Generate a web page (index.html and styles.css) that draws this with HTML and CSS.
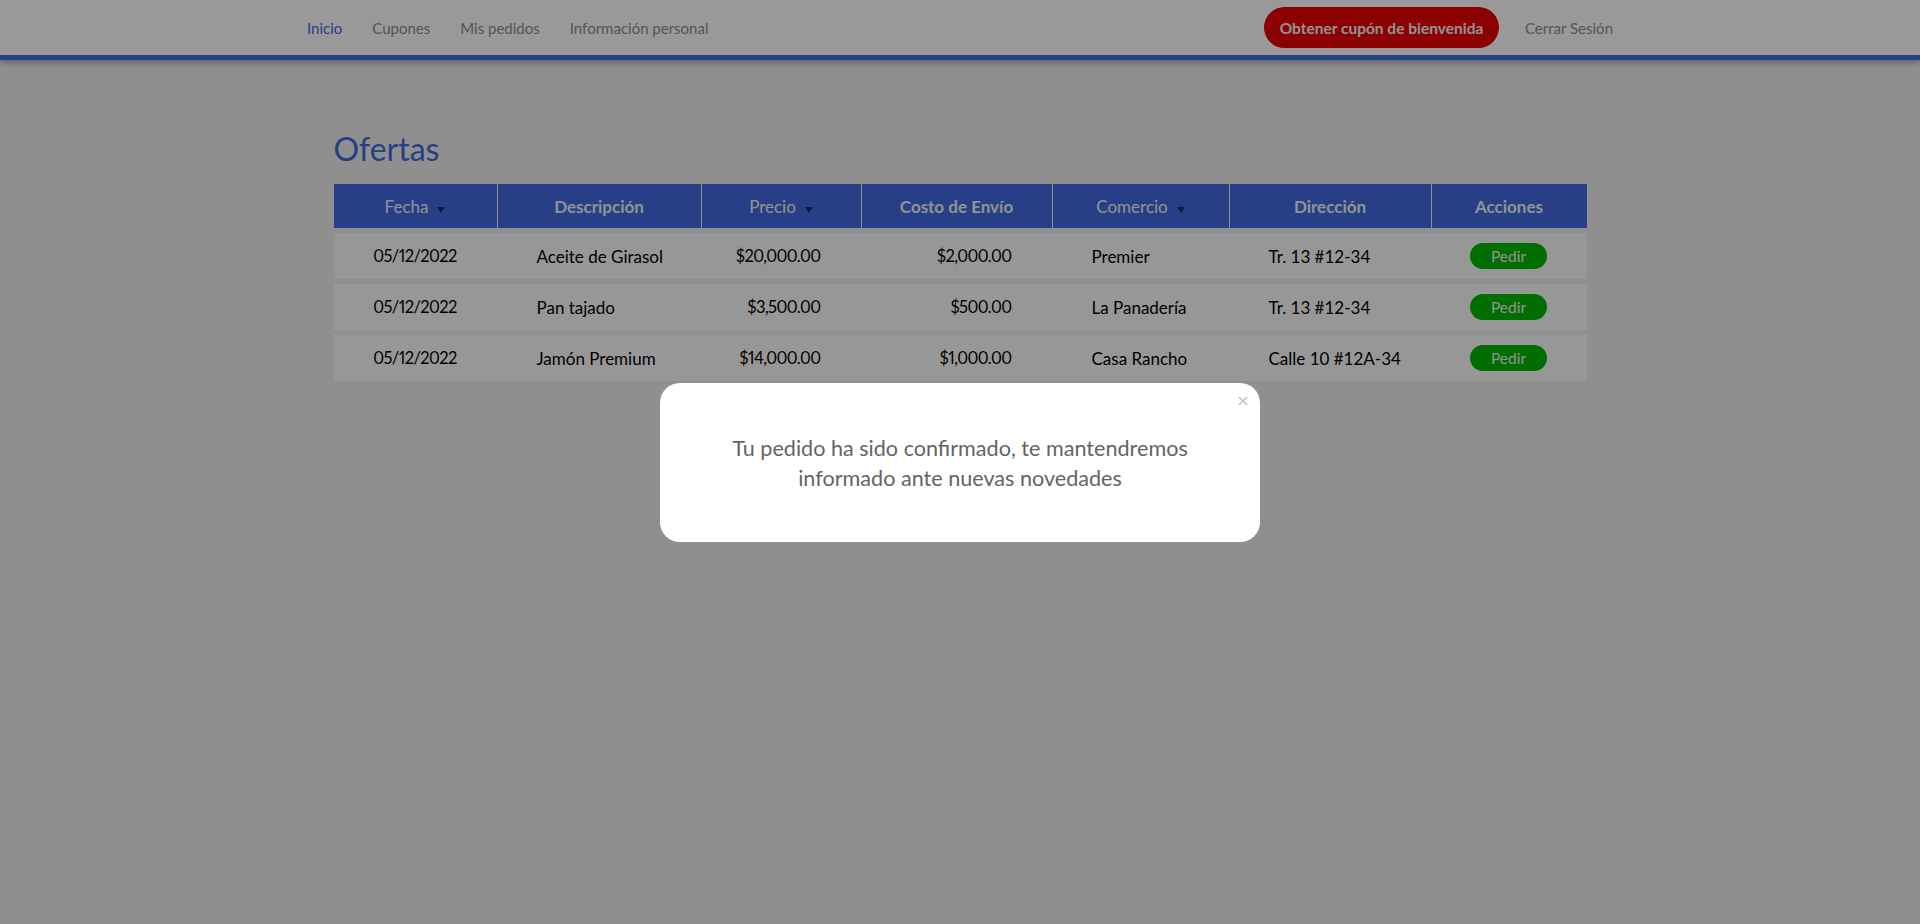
FILE: index.html
```html
<!DOCTYPE html>
<html lang="es">
<head>
<meta charset="utf-8">
<title>Ofertas</title>
<link rel="stylesheet" href="styles.css">
</head>
<body>
<header class="navbar">
  <div class="nav-inner">
    <nav class="nav-left">
      <a class="nav-link active" href="#">Inicio</a>
      <a class="nav-link" href="#">Cupones</a>
      <a class="nav-link" href="#">Mis pedidos</a>
      <a class="nav-link" href="#">Información personal</a>
    </nav>
    <div class="nav-right">
      <button class="btn-coupon">Obtener cupón de bienvenida</button>
      <a class="nav-link" href="#">Cerrar Sesión</a>
    </div>
  </div>
</header>

<main class="container">
  <h1 class="title">Ofertas</h1>
  <table class="offers">
    <thead>
      <tr>
        <th class="c-fecha sortable">Fecha<svg class="sort" width="8" height="6" viewBox="0 0 8 6"><path d="M0 0H8L4 6Z"/></svg></th>
        <th class="c-desc strong">Descripción</th>
        <th class="c-precio sortable">Precio<svg class="sort" width="8" height="6" viewBox="0 0 8 6"><path d="M0 0H8L4 6Z"/></svg></th>
        <th class="c-costo strong">Costo de Envío</th>
        <th class="c-comercio sortable">Comercio<svg class="sort" width="8" height="6" viewBox="0 0 8 6"><path d="M0 0H8L4 6Z"/></svg></th>
        <th class="c-dir strong">Dirección</th>
        <th class="c-acc strong">Acciones</th>
      </tr>
    </thead>
    <tbody>
      <tr>
        <td class="t-center num">05/12/2022</td>
        <td>Aceite de Girasol</td>
        <td class="t-right num">$20,000.00</td>
        <td class="t-right num">$2,000.00</td>
        <td>Premier</td>
        <td>Tr. 13 #12-34</td>
        <td class="t-center"><button class="btn-pedir">Pedir</button></td>
      </tr>
      <tr>
        <td class="t-center num">05/12/2022</td>
        <td>Pan tajado</td>
        <td class="t-right num">$3,500.00</td>
        <td class="t-right num">$500.00</td>
        <td>La Panadería</td>
        <td>Tr. 13 #12-34</td>
        <td class="t-center"><button class="btn-pedir">Pedir</button></td>
      </tr>
      <tr>
        <td class="t-center num">05/12/2022</td>
        <td>Jamón Premium</td>
        <td class="t-right num">$14,000.00</td>
        <td class="t-right num">$1,000.00</td>
        <td>Casa Rancho</td>
        <td>Calle 10 #12A-34</td>
        <td class="t-center"><button class="btn-pedir">Pedir</button></td>
      </tr>
    </tbody>
  </table>
</main>

<div class="overlay">
  <div class="modal">
    <button class="modal-close" aria-label="Cerrar">
      <svg width="10" height="10" viewBox="0 0 10 10"><path d="M1 1L9 9M9 1L1 9"/></svg>
    </button>
    <p class="modal-text">Tu pedido ha sido confirmado, te mantendremos<br>informado ante nuevas novedades</p>
  </div>
</div>
</body>
</html>
```

FILE: styles.css
```css
* { box-sizing: border-box; }

html, body {
  margin: 0;
  padding: 0;
  height: 100%;
}

body {
  background: #eeeeee;
  font-family: Lato, "Open Sans", sans-serif;
  color: #000;
}

/* ---------- navbar ---------- */
.navbar {
  background: #fff;
  height: 60px;
  border-bottom: 5px solid #4169e1;
  box-shadow: 0 3px 6px rgba(0, 0, 0, 0.3);
  position: relative;
  z-index: 1;
}

.nav-inner {
  width: 1306px;
  height: 55px;
  margin: 0 auto;
  display: flex;
  align-items: center;
  justify-content: space-between;
}

.nav-left {
  display: flex;
  align-items: center;
  gap: 30px;
}

.nav-right {
  display: flex;
  align-items: center;
  gap: 26px;
}

.nav-link {
  font-size: 15px;
  color: #8d8d8d;
  text-decoration: none;
}

.nav-link.active {
  color: #4169e1;
}

.btn-coupon {
  font-family: inherit;
  font-size: 15.5px;
  font-weight: 700;
  color: #f4f4f4;
  background: #e80000;
  border: none;
  border-radius: 21px;
  height: 41px;
  width: 235px;
  padding: 0;
}

/* ---------- main ---------- */
.container {
  width: 1253px;
  margin: 0 auto;
  padding-top: 70px;
}

.title {
  margin: 0 0 11px;
  font-size: 32px;
  line-height: 38px;
  font-weight: 400;
  color: #4169e1;
}

.offers {
  width: 1253px;
  table-layout: fixed;
  border-collapse: separate;
  border-spacing: 0 5px;
  font-size: 17px;
}

.offers th {
  background: #4169e1;
  color: #f4f4f4;
  height: 44px;
  padding: 0;
  font-weight: 400;
  text-align: center;
  white-space: nowrap;
}

.offers th + th {
  border-left: 1px solid #f2f2f2;
}

.offers th.strong {
  font-weight: 700;
}

.sort {
  margin-left: 9px;
  fill: #1c2b6b;
}

.c-fecha { width: 163px; }
.c-desc { width: 204px; }
.c-precio { width: 160px; }
.c-costo { width: 191px; }
.c-comercio { width: 177px; }
.c-dir { width: 202px; }
.c-acc { width: 156px; }

.offers td {
  background: #fcfcfc;
  height: 46px;
  padding: 0 40px;
  white-space: nowrap;
}

.offers td.num {
  font-size: 16.5px;
  font-variant-numeric: proportional-nums;
  letter-spacing: -0.6px;
}

.offers td.t-center { text-align: center; padding: 0; }
.offers td.t-right { text-align: right; padding-left: 0; }

.btn-pedir {
  font-family: inherit;
  font-size: 15.5px;
  color: #f4f4f4;
  background: #00b800;
  border: none;
  border-radius: 13px;
  width: 77px;
  height: 26px;
  padding: 0;
  vertical-align: middle;
}

/* ---------- modal ---------- */
.overlay {
  position: fixed;
  inset: 0;
  background: rgba(0, 0, 0, 0.4);
  display: flex;
  align-items: center;
  justify-content: center;
  z-index: 10;
}

.modal {
  position: relative;
  width: 600px;
  background: #fff;
  border-radius: 20px;
  padding: 50px 40px 49px;
}

.modal-text {
  margin: 0;
  text-align: center;
  font-size: 21.6px;
  line-height: 30px;
  color: #646464;
}

.modal-close {
  position: absolute;
  top: 13px;
  right: 12px;
  width: 10px;
  height: 10px;
  padding: 0;
  border: none;
  background: none;
  display: flex;
}

.modal-close path {
  stroke: #bcbcbc;
  stroke-width: 1.4;
  fill: none;
}
```
